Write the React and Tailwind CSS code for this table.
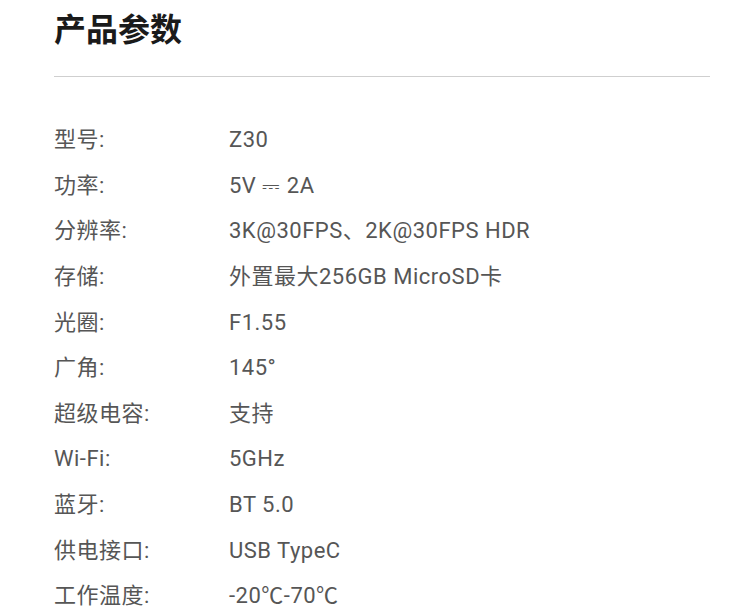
import React from "react";

const specs = [
    ["型号:", "Z30"],
    ["功率:", "5V ⎓ 2A"],
    ["分辨率:", "3K@30FPS、2K@30FPS HDR"],
    ["存储:", "外置最大256GB MicroSD卡"],
    ["光圈:", "F1.55"],
    ["广角:", "145°"],
    ["超级电容:", "支持"],
    ["Wi-Fi:", "5GHz"],
    ["蓝牙:", "BT 5.0"],
    ["供电接口:", "USB TypeC"],
    ["工作温度:", "-20℃-70℃"],
];

export default function App() {
    return (
        <div className="w-full min-h-screen bg-white px-[54px] pt-[10px]"
             style={{fontFamily: "Roboto, 'Noto Sans CJK SC', sans-serif"}}>
            <h1 className="text-[32px] leading-[40px] font-bold text-[#1a1a1a]">产品参数</h1>
            <div className="mt-[26px] w-[656px] h-px bg-[#cfcfcf]"/>
            <div className="mt-[40px] flex flex-col">
                {specs.map(([label, value]) => (
                    <div key={label} className="flex items-center h-[45.6px] text-[22px] tracking-[0.5px] text-[#565656]">
                        <div className="w-[175px] shrink-0">{label}</div>
                        <div>{value}</div>
                    </div>
                ))}
            </div>
        </div>
    );
}
